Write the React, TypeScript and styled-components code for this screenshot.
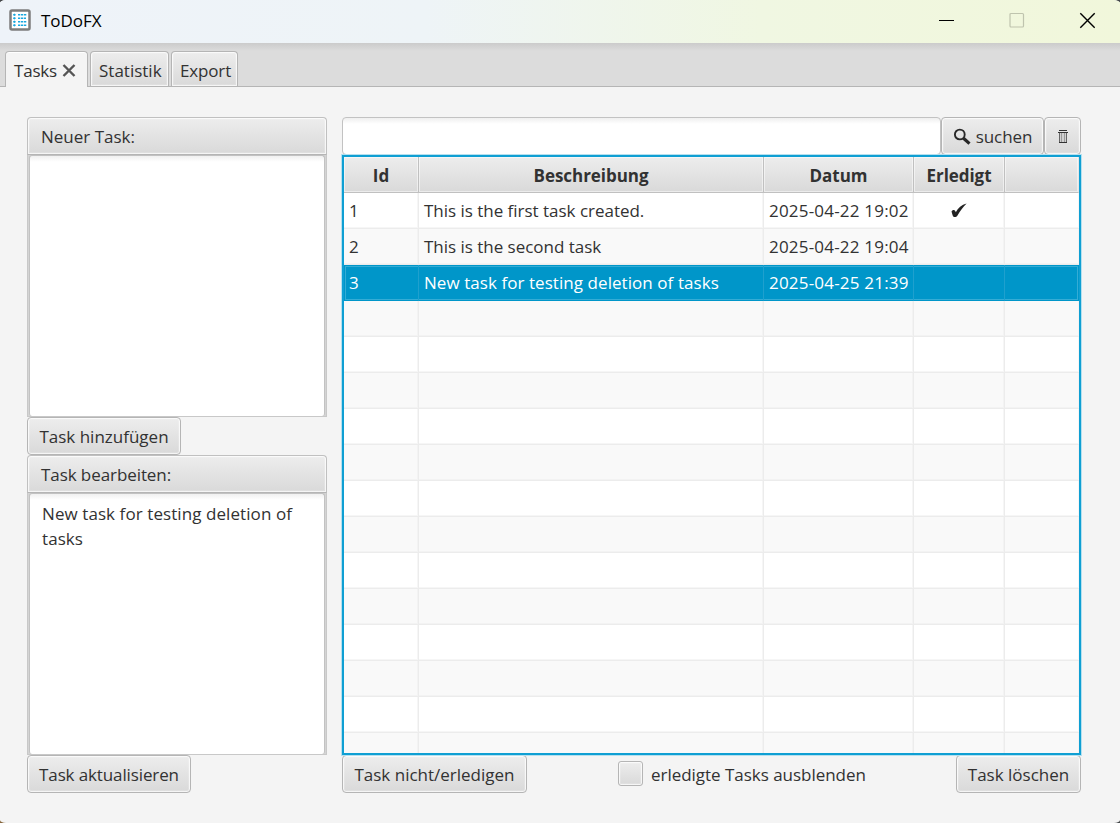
import React from "react";
import styled, { createGlobalStyle, css } from "styled-components";

const Global = createGlobalStyle`
  * { box-sizing: border-box; }
  body { margin: 0; background: linear-gradient(#44474a 50%, transparent 50%), linear-gradient(90deg, #86663c 50%, #44474a 50%); }
  button, input, textarea { font: inherit; color: inherit; letter-spacing: inherit; }
`;

const bevel = css`
  border: 1px solid #b5b5b5;
  background: linear-gradient(#ededed, #d9d9d9);
  box-shadow: inset 0 0 0 1px rgba(255, 255, 255, 0.7), inset 0 0 0 2px rgba(255, 255, 255, 0.15);
`;

const Window = styled.div`
  width: 1120px;
  height: 823px;
  display: flex;
  flex-direction: column;
  overflow: hidden;
  border-radius: 6px 7px 6px 6px / 3px;
  background: #f4f4f4;
  color: #323232;
  font: 17px/24px "Open Sans", "Noto Sans", sans-serif;
  white-space: nowrap;
`;

const TitleBar = styled.header`
  height: 43px;
  flex: none;
  display: flex;
  align-items: center;
  padding: 0 24px 3px 8px;
  background: linear-gradient(90deg, #eef3f9 0%, #eef4f7 38%, #f0f7e2 68%, #f1f7db 100%);
  color: #000;
`;

const AppTitle = styled.h1`
  flex: 1;
  margin: 0 0 0 9px;
  padding-top: 1px;
  font-size: 17px;
  font-weight: 400;
  letter-spacing: -0.05px;
`;

const WindowControls = styled.div`
  display: flex;
  gap: 54px;
`;

const TabStrip = styled.nav`
  height: 44px;
  flex: none;
  display: flex;
  align-items: flex-end;
  gap: 2px;
  padding-left: 5px;
  border-bottom: 1px solid #b5b5b5;
  background: linear-gradient(#cbcbcb, #dcdcdc 8px, #dcdcdc);
`;

const Tab = styled.div<{ $w: number; $active?: boolean }>`
  ${bevel}
  width: ${(p) => p.$w}px;
  height: 35px;
  display: flex;
  align-items: center;
  gap: 5px;
  padding: 4px 0 0 8px;
  border-bottom: 0;
  border-radius: 4px 4px 0 0;
  ${(p) => p.$active && css`
    height: 36px;
    margin-bottom: -1px;
    padding-top: 3px;
    background: #f4f4f4;
    box-shadow: inset 0 1px 0 #fff;
  `}
`;

const Text = styled.span<{ $ls?: number }>`
  letter-spacing: ${(p) => p.$ls ?? 0}px;
`;

const Content = styled.main`
  flex: 1;
  display: flex;
  gap: 15px;
  padding: 30px 39px 0 27px;
`;

const Sidebar = styled.section`
  width: 300px;
  display: flex;
  flex-direction: column;
  align-items: flex-start;
`;

const PaneTitle = styled.h2`
  ${bevel}
  width: 100%;
  height: 38px;
  margin: 0;
  padding: 7px 13px;
  border-color: #c0c0c0;
  border-bottom-color: #b5b5b5;
  border-radius: 4px 4px 0 0;
  font-size: 17px;
  font-weight: 400;
`;

const PaneBody = styled.div`
  width: 100%;
  height: 262px;
  padding: 0 1px;
  border: 1px solid #c8c8c8;
  border-top: 0;
  background: #d4d4d4;
  display: flex;
`;

const TextArea = styled.textarea`
  flex: 1;
  resize: none;
  outline: 0;
  padding: 7px 11px 8px 12px;
  border: 1px solid #c2c2c2;
  border-bottom: 0;
  border-radius: 3px;
  background: linear-gradient(#f0f0f0, #fff 6px);
  line-height: 25px;
  letter-spacing: 0.08px;
  overflow: hidden;
`;

const Button = styled.button<{ $w: number }>`
  ${bevel}
  width: ${(p) => p.$w}px;
  height: 38px;
  flex: none;
  display: flex;
  align-items: center;
  justify-content: center;
  gap: 5px;
  padding: 1px 0 0;
  border-radius: 4px;
`;

const Main = styled.section`
  width: 739px;
  display: flex;
  flex-direction: column;
`;

const SearchRow = styled.div`
  height: 38px;
  display: flex;
`;

const SearchInput = styled.input`
  width: 599px;
  height: 38px;
  border: 1px solid #c2c2c2;
  border-radius: 4px;
  outline: 0;
  background: linear-gradient(#efefef, #fff 6px);
`;

const TableFrame = styled.div`
  position: relative;
  height: 600px;
  border: 2px solid #0f9fd3;
  box-shadow: 0 0 0 1px #b5e0ef;
  background: #fff;
  overflow: hidden;
`;

const columns = "75px 345px 150px 91px 1fr";

const HeaderRow = styled.div`
  height: 36px;
  display: grid;
  grid-template-columns: ${columns};
  font-weight: 700;
  letter-spacing: -0.05px;
`;

const HeaderCell = styled.div`
  display: flex;
  align-items: center;
  justify-content: center;
  padding-top: 2px;
  border-right: 1px solid #c0c0c0;
  border-bottom: 1px solid #c0c0c0;
  background: linear-gradient(#ededed, #d9d9d9);
  box-shadow: inset 0 0 0 1px rgba(255, 255, 255, 0.5);
  &:last-child { border-right-color: #e4e4e4; }
`;

const Row = styled.div<{ $odd: boolean; $selected: boolean }>`
  height: 36px;
  display: grid;
  grid-template-columns: ${columns};
  background: ${(p) => (p.$odd ? "#f9f9f9" : "#fff")};
  ${(p) => p.$selected && css`
    background: #0096c9;
    color: #fff;
    box-shadow: inset 0 0 0 1px #0096c9, inset 0 0 0 2px #35acd5;
  `}
`;

const Cell = styled.div<{ $selected: boolean; $center?: boolean; $ls?: number }>`
  display: flex;
  align-items: center;
  justify-content: ${(p) => (p.$center ? "center" : "flex-start")};
  padding: 0 0 0 ${(p) => (p.$center ? 0 : 5)}px;
  letter-spacing: ${(p) => p.$ls ?? 0}px;
  border-right: 1px solid ${(p) => (p.$selected ? "#1fa0ce" : "#ececec")};
  border-bottom: 1px solid ${(p) => (p.$selected ? "transparent" : "#ececec")};
  box-shadow: ${(p) => (p.$selected ? "none" : "inset -1px -1px 0 rgba(236, 236, 236, 0.45)")};
  &:last-child { border-right: 0; }
`;

const Footer = styled.div`
  display: flex;
  align-items: center;
`;

const CheckLabel = styled.label`
  display: flex;
  align-items: center;
  gap: 8px;
  margin: 1px auto 0 91px;
`;

const CheckBox = styled.span`
  ${bevel}
  width: 25px;
  height: 25px;
  margin-top: -3px;
  border-radius: 3px;
`;

const AppIcon = () => (
  <svg width="24" height="24" viewBox="0 0 24 24">
    <rect x="2.500" y="2.500" width="19" height="19" rx="1.500" fill="#fff" stroke="#7d7d7d" strokeWidth="2.500" />
    <g stroke="#18a8e0" strokeWidth="1.400">
      <path d="M5.200 6.800h2.400M5.200 10.300h2.400M5.200 13.800h2.400M5.200 17.300h2.400" />
      <path d="M6.400 5.600v2.400M6.400 9.100v2.400M6.400 12.600v2.400M6.400 16.100v2.400" strokeWidth=".8" />
      <path d="M10 6.800h9M10 10.300h8M10 13.800h8.500M10 17.300h9" strokeDasharray="2.300 .7" />
    </g>
  </svg>
);

const SearchIcon = () => (
  <svg width="18" height="18" viewBox="0 0 18 18" fill="none" stroke="#282828">
    <circle cx="6.800" cy="6.500" r="4.900" strokeWidth="1.900" />
    <path d="M10.500 10.300l6 5.300" strokeWidth="3.200" />
  </svg>
);

const TrashIcon = () => (
  <svg width="10" height="15" viewBox="0 0 10 15" fill="none" stroke="#333">
    <path d="M1 1.500h8" />
    <path d="M0 3.500h10" />
    <path d="M1.500 4v9.500h7V4" fill="#d0d0d0" stroke="#666" />
    <path d="M1 13.500h8" />
    <path d="M3.500 4v9M6.500 4v9" stroke="#999" />
  </svg>
);

const CheckMark = () => (
  <svg width="16" height="15" viewBox="0 0 16 15">
    <path d="M.5 8.600C1.300 6.600 3.600 6.500 4.400 8.200L4.800 9.200C7 5.200 10.500 1.800 15.600.5 12 4.200 9 8.300 6.500 12.500 5.200 14.600 2.400 14.700 1.700 12.500Z" fill="#222" />
  </svg>
);

const tasks = [
  { id: "1", text: "This is the first task created.", date: "2025-04-22 19:02", done: true },
  { id: "2", text: "This is the second task", date: "2025-04-22 19:04", done: false },
  { id: "3", text: "New task for testing deletion of tasks", date: "2025-04-25 21:39", done: false },
];

const headings = ["Id", "Beschreibung", "Datum", "Erledigt", ""];

export default function App() {
  return (
    <Window>
      <Global />
      <TitleBar>
        <AppIcon />
        <AppTitle>ToDoFX</AppTitle>
        <WindowControls>
          <svg width="18" height="17" viewBox="0 0 18 17"><path d="M3 8.500h15" stroke="#000" /></svg>
          <svg width="17" height="17" viewBox="0 0 17 17"><rect x="2" y="1.500" width="13.500" height="13.500" rx="1" fill="none" stroke="#bfc4ae" strokeWidth="1.200" /></svg>
          <svg width="17" height="17" viewBox="0 0 17 17"><path d="M1.300 1.300l14.400 14.400M15.700 1.300L1.300 15.700" stroke="#000" strokeWidth="1.400" /></svg>
        </WindowControls>
      </TitleBar>
      <TabStrip>
        <Tab $w={83} $active>
          <Text $ls={-0.2}>Tasks</Text>
          <svg width="14" height="14" viewBox="0 0 14 14"><path d="M1.500 1l11 11M12.500 1l-11 11" stroke="#555" strokeWidth="2.400" /></svg>
        </Tab>
        <Tab $w={79}><Text>Statistik</Text></Tab>
        <Tab $w={67}><Text $ls={-0.15}>Export</Text></Tab>
      </TabStrip>
      <Content>
        <Sidebar>
          <PaneTitle>Neuer Task:</PaneTitle>
          <PaneBody><TextArea spellCheck={false} /></PaneBody>
          <Button $w={154}><Text>Task hinzufügen</Text></Button>
          <PaneTitle><Text $ls={-0.08}>Task bearbeiten:</Text></PaneTitle>
          <PaneBody>
            <TextArea spellCheck={false} defaultValue="New task for testing deletion of tasks" />
          </PaneBody>
          <Button $w={164}><Text $ls={-0.12}>Task aktualisieren</Text></Button>
        </Sidebar>
        <Main>
          <SearchRow>
            <SearchInput />
            <Button $w={103}><SearchIcon /><Text $ls={-0.1}>suchen</Text></Button>
            <Button $w={37}><TrashIcon /></Button>
          </SearchRow>
          <TableFrame>
            <HeaderRow>
              {headings.map((h, i) => <HeaderCell key={i}>{h}</HeaderCell>)}
            </HeaderRow>
            {Array.from({ length: 16 }, (_, i) => {
              const task = tasks[i];
              const selected = i === 2;
              return (
                <Row key={i} $odd={i % 2 === 1} $selected={selected}>
                  <Cell $selected={selected}>{task?.id}</Cell>
                  <Cell $selected={selected} $ls={selected ? 0.06 : -0.02}>{task?.text}</Cell>
                  <Cell $selected={selected} $ls={0.2}>{task?.date}</Cell>
                  <Cell $selected={selected} $center>{task?.done && <CheckMark />}</Cell>
                  <Cell $selected={selected} />
                </Row>
              );
            })}
          </TableFrame>
          <Footer>
            <Button $w={185}><Text>Task nicht/erledigen</Text></Button>
            <CheckLabel><CheckBox /><Text $ls={-0.03}>erledigte Tasks ausblenden</Text></CheckLabel>
            <Button $w={125}><Text>Task löschen</Text></Button>
          </Footer>
        </Main>
      </Content>
    </Window>
  );
}
